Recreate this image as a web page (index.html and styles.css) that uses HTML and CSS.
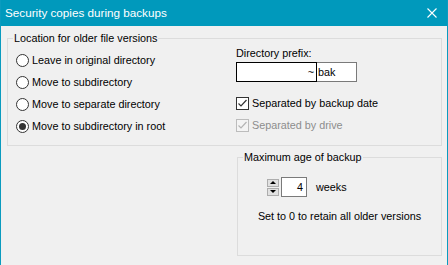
FILE: index.html
```html
<!DOCTYPE html>
<html>
<head>
<meta charset="utf-8">
<link rel="stylesheet" href="styles.css">
</head>
<body>
<div class="window">
  <div class="titlebar">
    <span class="title">Security copies during backups</span>
    <svg class="close" width="10" height="10" viewBox="0 0 10 10"><path d="M0.5 0.5 L9.5 9.5 M9.5 0.5 L0.5 9.5" stroke="#fff" stroke-width="1.1" fill="none"/></svg>
  </div>
  <div class="client">
    <fieldset class="group group-location">
      <legend>Location for older file versions</legend>
      <div class="location-body">
        <div class="radios">
          <div class="opt"><span class="radio"></span><span>Leave in original directory</span></div>
          <div class="opt"><span class="radio"></span><span>Move to subdirectory</span></div>
          <div class="opt"><span class="radio"></span><span>Move to separate directory</span></div>
          <div class="opt"><span class="radio radio-on"></span><span>Move to subdirectory in root</span></div>
        </div>
        <div class="prefix-col">
          <div class="label">Directory prefix:</div>
          <div class="prefix">
            <div class="prefix-tilde">~</div>
            <div class="prefix-ext">bak</div>
          </div>
          <div class="opt opt-first-check"><span class="check"><svg width="11" height="11" viewBox="0 0 11 11"><path d="M1.5 5.5 L4 8 L9.5 2" stroke="#333" stroke-width="1.2" fill="none"/></svg></span><span>Separated by backup date</span></div>
          <div class="opt disabled"><span class="check check-off"><svg width="11" height="11" viewBox="0 0 11 11"><path d="M1.5 5.5 L4 8 L9.5 2" stroke="#b4b4b4" stroke-width="1.2" fill="none"/></svg></span><span>Separated by drive</span></div>
        </div>
      </div>
    </fieldset>
    <fieldset class="group group-age">
      <legend>Maximum age of backup</legend>
      <div class="age-body">
        <div class="spin-row">
          <div class="spin">
            <span class="spin-btn spin-up"></span>
            <span class="spin-btn spin-down"></span>
          </div>
          <div class="num">4</div>
          <span class="unit">weeks</span>
        </div>
        <div class="hint">Set to 0 to retain all older versions</div>
      </div>
    </fieldset>
  </div>
</div>
</body>
</html>
```
FILE: styles.css
```css
* { box-sizing: border-box; }
html, body { margin: 0; padding: 0; }
body {
  width: 448px;
  height: 265px;
  overflow: hidden;
  background: #f0f0f0;
  font-family: "Liberation Sans", Arial, sans-serif;
  font-size: 10.8px;
  line-height: 14px;
  color: #000;
}
.window {
  height: 265px;
  border-left: 1px solid #0a9bbf;
  border-right: 1px solid #0a9bbf;
  display: flex;
  flex-direction: column;
}
.titlebar {
  height: 26px;
  flex: none;
  background: #0099bc;
  color: #fff;
  display: flex;
  align-items: center;
  justify-content: space-between;
  padding: 0 10px 0 4px;
  font-size: 11.7px;
}
.close { display: block; }
.client {
  flex: 1;
  padding: 5px 5px 0 6px;
}
.group {
  margin: 0;
  padding: 0;
  min-width: 0;
  border: 1px solid #dcdcdc;
}
.group legend {
  padding: 0 1px;
  margin-left: 5px;
  line-height: 14px;
}
.location-body {
  display: grid;
  grid-template-columns: 220px 1fr;
  padding: 1px 0 8px 8px;
}
.radios { padding-top: 3px; }
.opt {
  height: 22px;
  display: flex;
  align-items: center;
  white-space: nowrap;
}
.radio {
  width: 13px;
  height: 13px;
  border: 1px solid #333;
  border-radius: 50%;
  background: #fff;
  margin-right: 3px;
  flex: none;
  display: flex;
  align-items: center;
  justify-content: center;
}
.radio-on::after {
  content: "";
  width: 7px;
  height: 7px;
  border-radius: 50%;
  background: #333;
}
.label { height: 14px; }
.prefix {
  display: flex;
  margin-top: 2px;
  height: 20px;
}
.prefix-tilde {
  width: 81px;
  border: 1px solid #000;
  background: #fff;
  text-align: right;
  padding-right: 2px;
  line-height: 18px;
}
.prefix-ext {
  width: 40px;
  border: 1px solid #7a7a7a;
  border-left: none;
  background: #fff;
  padding-left: 1px;
  line-height: 18px;
}
.opt-first-check { margin-top: 10px; }
.check {
  width: 13px;
  height: 13px;
  border: 1px solid #333;
  background: #fff;
  margin-right: 3px;
  flex: none;
  display: flex;
  align-items: center;
  justify-content: center;
}
.check svg { display: block; }
.check-off {
  border-color: #bcbcbc;
  background: #f4f4f4;
}
.disabled { color: #8d8d8d; }
.group-age {
  margin: 4px 0 0 auto;
  width: 205px;
  height: 106px;
}
.age-body { padding-top: 13px; }
.spin-row {
  display: flex;
  align-items: center;
  height: 20px;
  padding-left: 29px;
}
.spin {
  width: 12px;
  height: 17px;
  margin-right: 2px;
  display: flex;
  flex-direction: column;
  justify-content: space-between;
}
.spin-btn {
  height: 8px;
  background: #e1e1e1;
  border: 1px solid #adadad;
  display: flex;
  align-items: center;
  justify-content: center;
}
.spin-up::after {
  content: "";
  border-left: 3px solid transparent;
  border-right: 3px solid transparent;
  border-bottom: 3px solid #000;
}
.spin-down::after {
  content: "";
  border-left: 3px solid transparent;
  border-right: 3px solid transparent;
  border-top: 3px solid #000;
}
.num {
  width: 26px;
  height: 20px;
  border: 1px solid #7a7a7a;
  background: #fff;
  text-align: right;
  padding-right: 3px;
  line-height: 18px;
}
.unit { margin-left: 9px; }
.hint {
  margin-top: 12px;
  text-align: center;
}
```
